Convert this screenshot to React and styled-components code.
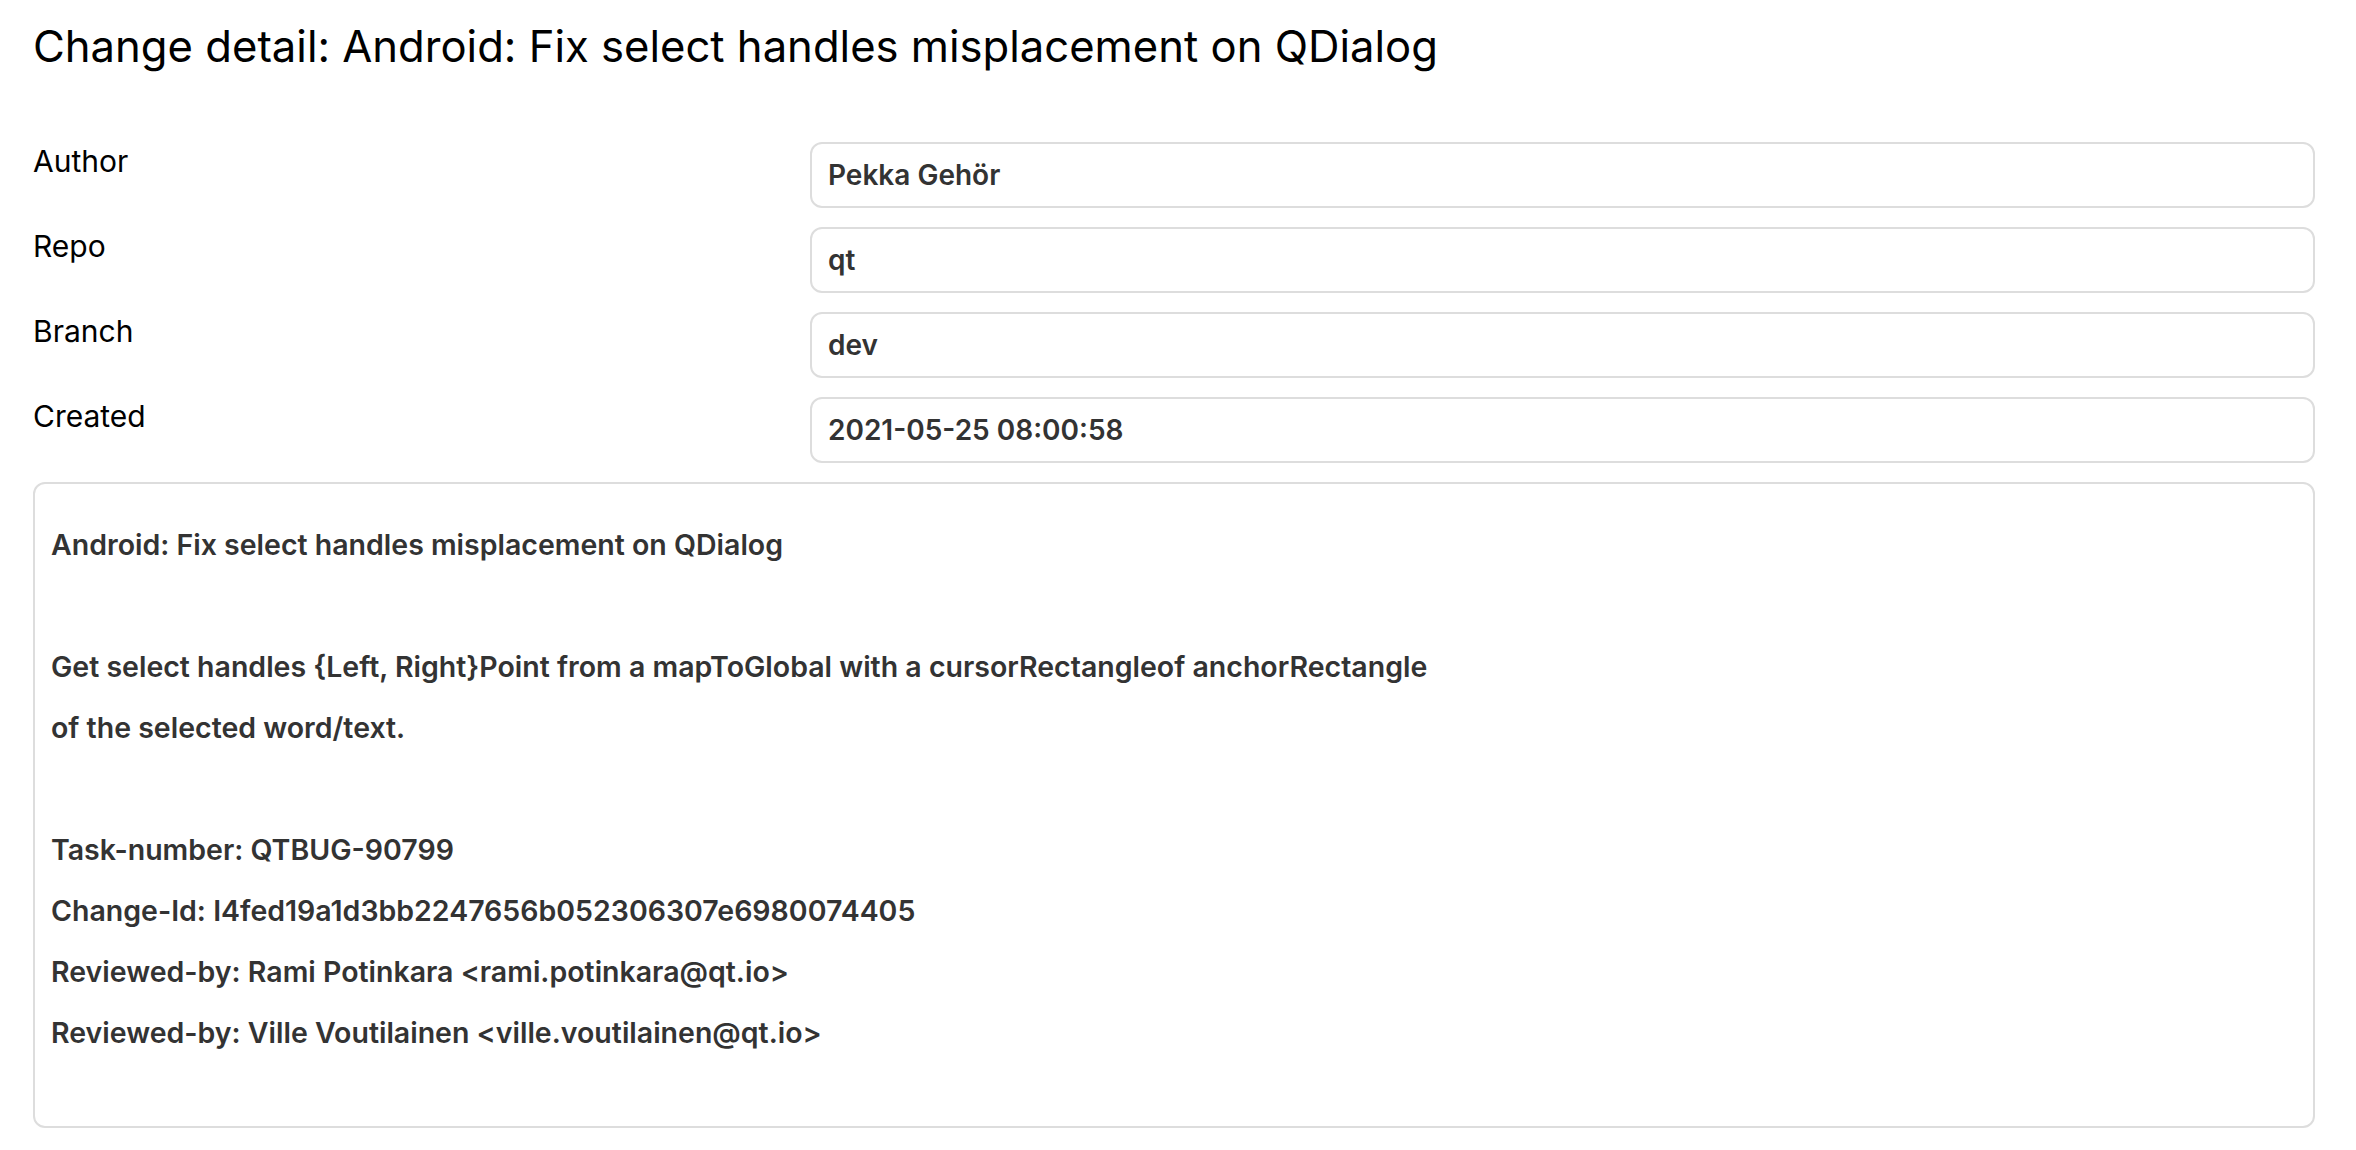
import React from "react";
import styled, { createGlobalStyle } from "styled-components";

const GlobalStyle = createGlobalStyle`
  html, body {
    margin: 0;
    padding: 0;
    background: #ffffff;
  }
  body {
    font-family: Inter, "Noto Sans", "Liberation Sans", sans-serif;
    color: #000;
  }
`;

const Page = styled.main`
  padding: 21px 41px 25px 33px;
`;

const Title = styled.h1`
  margin: 0 0 69px 0;
  font-size: 43.6px;
  font-weight: 400;
  line-height: 52px;
  color: #000;
`;

const Form = styled.div`
  display: flex;
  flex-direction: column;
  gap: 19px;
`;

const Row = styled.div`
  display: grid;
  grid-template-columns: 777px 1fr;
  align-items: start;
`;

const Label = styled.div`
  font-size: 30px;
  line-height: 36px;
  padding-top: 1px;
  color: #000;
`;

const ValueBox = styled.div`
  box-sizing: border-box;
  height: 66px;
  border: 2px solid #dddddd;
  border-radius: 12px;
  padding: 0 16px;
  display: flex;
  align-items: center;
  font-size: 28px;
  font-weight: 600;
  color: #333333;
`;

const Message = styled.div`
  box-sizing: border-box;
  border: 2px solid #dddddd;
  border-radius: 12px;
  padding: 30px 16px 63px;
  font-size: 28.5px;
  font-weight: 600;
  color: #333333;
`;

const Line = styled.div`
  height: 61px;
  line-height: 61px;
  white-space: pre;
`;

const fields = [
  ["Author", "Pekka Gehör"],
  ["Repo", "qt"],
  ["Branch", "dev"],
  ["Created", "2021-05-25 08:00:58"],
];

const messageLines = [
  "Android: Fix select handles misplacement on QDialog",
  "",
  "Get select handles {Left, Right}Point from a mapToGlobal with a cursorRectangleof anchorRectangle",
  "of the selected word/text.",
  "",
  "Task-number: QTBUG-90799",
  "Change-Id: I4fed19a1d3bb2247656b052306307e6980074405",
  "Reviewed-by: Rami Potinkara <rami.potinkara@qt.io>",
  "Reviewed-by: Ville Voutilainen <ville.voutilainen@qt.io>",
];

export default function App() {
  return (
    <>
      <GlobalStyle />
      <Page>
        <Title>Change detail: Android: Fix select handles misplacement on QDialog</Title>
        <Form>
          {fields.map(([label, value]) => (
            <Row key={label}>
              <Label>{label}</Label>
              <ValueBox>{value}</ValueBox>
            </Row>
          ))}
          <Message>
            {messageLines.map((l, i) => (
              <Line key={i}>{l}</Line>
            ))}
          </Message>
        </Form>
      </Page>
    </>
  );
}
